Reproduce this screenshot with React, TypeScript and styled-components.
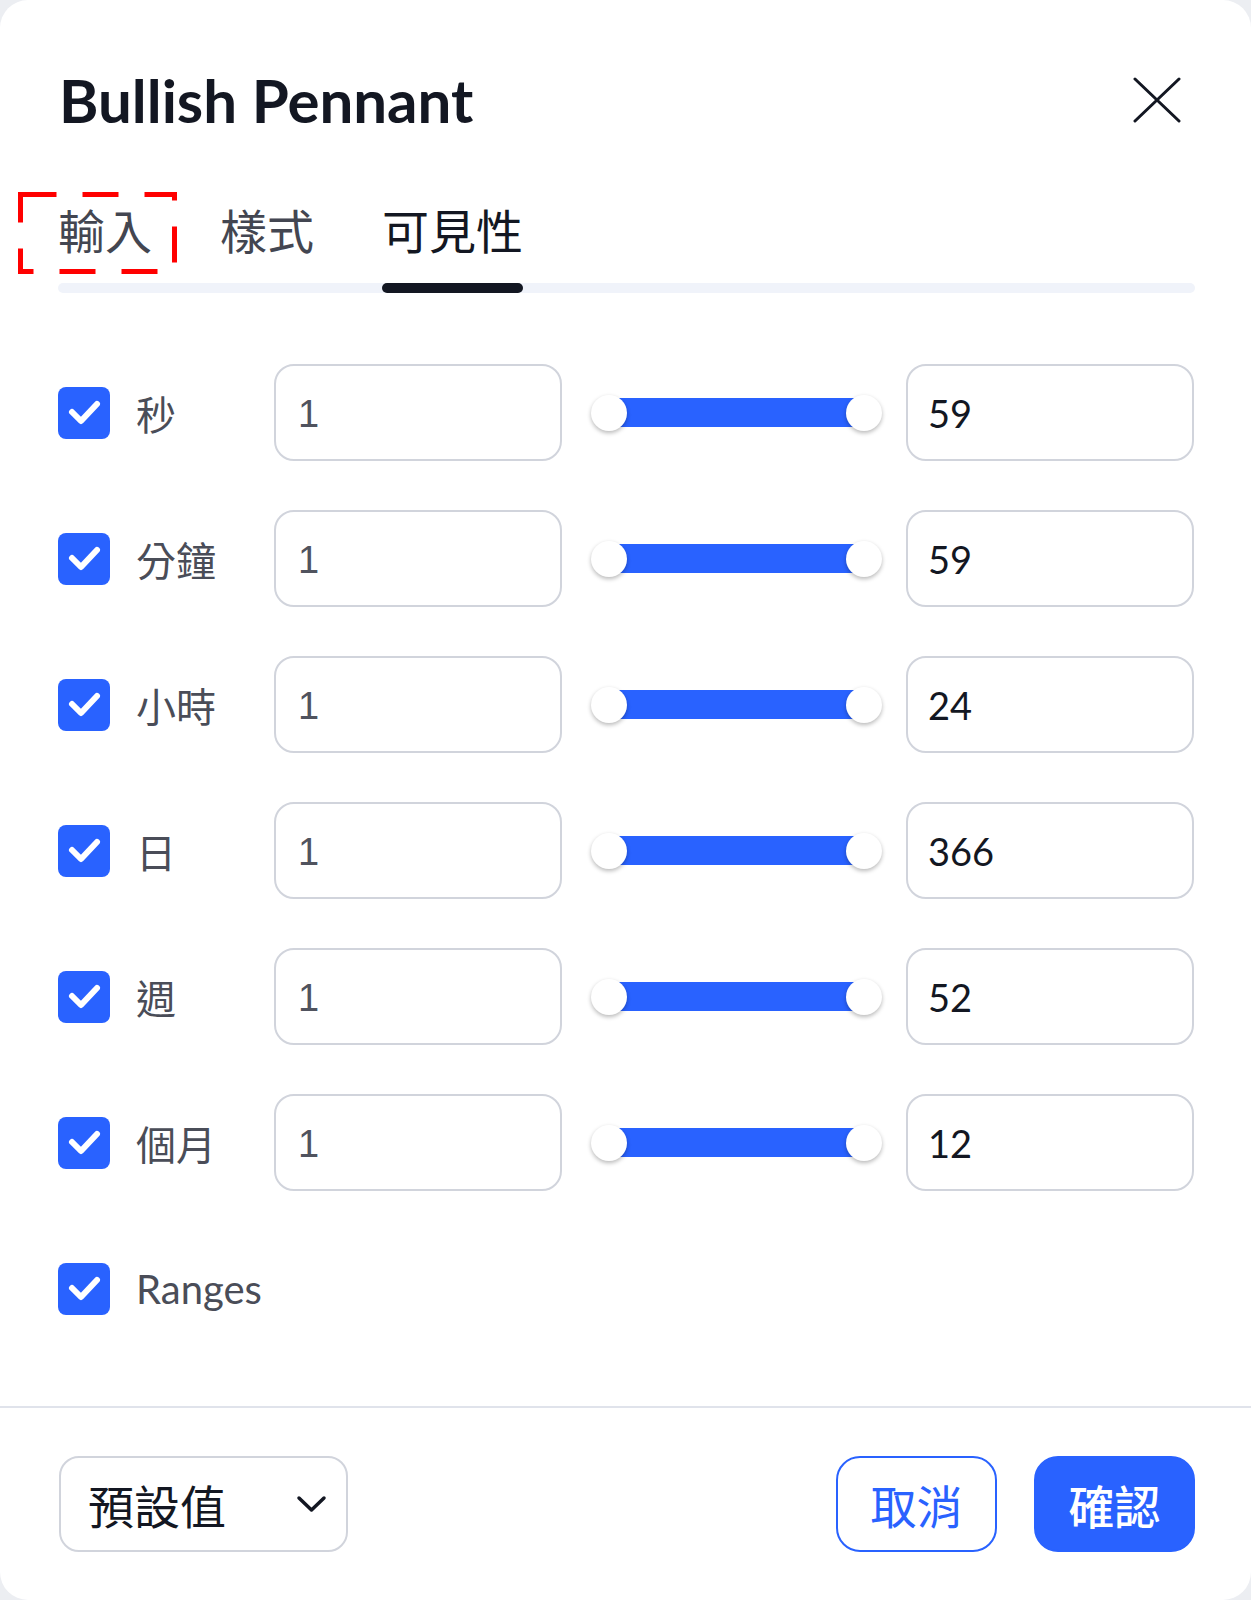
import styled, { createGlobalStyle } from "styled-components";

const GlobalStyle = createGlobalStyle`
  html, body {
    margin: 0;
    padding: 0;
    background: #eceef2;
  }
  * {
    box-sizing: border-box;
  }
`;

const CJK = `"Noto Sans CJK TC", "Noto Sans", sans-serif`;
const LATIN = `Lato, "Noto Sans CJK TC", sans-serif`;
const BLUE = "#2962ff";

const rows = [
    { label: "秒", max: "59" },
    { label: "分鐘", max: "59" },
    { label: "小時", max: "24" },
    { label: "日", max: "366" },
    { label: "週", max: "52" },
    { label: "個月", max: "12" },
];

const CheckIcon = () => (
    <svg width="52" height="52" viewBox="0 0 52 52">
        <path d="M14 25 L23 34 L39 17" fill="none" stroke="#fff" strokeWidth="6" strokeLinecap="round" strokeLinejoin="round" />
    </svg>
);

export default function App() {
    return (
        <>
            <GlobalStyle />
            <Dialog>
                <Header>
                    <Title>Bullish Pennant</Title>
                    <CloseButton>
                        <svg width="48" height="48" viewBox="0 0 48 48">
                            <path d="M2 3 L46 45 M46 3 L2 45" stroke="#131722" strokeWidth="3" strokeLinecap="round" />
                        </svg>
                    </CloseButton>
                </Header>

                <Tabs>
                    <TabRow>
                        <Tab>
                            輸入
                            <Marker>
                                <svg width="159" height="82" viewBox="0 0 159 82">
                                    <rect x="2.5" y="2.5" width="154" height="77" fill="none" stroke="#ff0000" strokeWidth="5" strokeDasharray="36 26" />
                                </svg>
                            </Marker>
                        </Tab>
                        <Tab>樣式</Tab>
                        <Tab $active>可見性</Tab>
                    </TabRow>
                    <Track />
                </Tabs>

                <Body>
                    {rows.map((r) => (
                        <Row key={r.label}>
                            <Checkbox><CheckIcon /></Checkbox>
                            <Label>{r.label}</Label>
                            <Field $muted>1</Field>
                            <Slider>
                                <Thumb />
                                <Fill />
                                <Thumb />
                            </Slider>
                            <Field>{r.max}</Field>
                        </Row>
                    ))}
                    <Row>
                        <Checkbox><CheckIcon /></Checkbox>
                        <Label $latin>Ranges</Label>
                    </Row>
                </Body>

                <Separator />

                <Footer>
                    <Select>
                        <span>預設值</span>
                        <svg width="31" height="18" viewBox="0 0 31 18">
                            <path d="M3 3 L15.5 15 L28 3" fill="none" stroke="#131722" strokeWidth="3.5" strokeLinecap="round" strokeLinejoin="round" />
                        </svg>
                    </Select>
                    <Buttons>
                        <Button>取消</Button>
                        <Button $primary>確認</Button>
                    </Buttons>
                </Footer>
            </Dialog>
        </>
    );
}

const Dialog = styled.div`
    width: 1251px;
    height: 1600px;
    background: #fff;
    border-radius: 28px;
    display: flex;
    flex-direction: column;
    overflow: hidden;
`;

const Header = styled.div`
    display: flex;
    align-items: center;
    justify-content: space-between;
    height: 72px;
    margin-top: 64px;
    padding: 0 68px 0 59px;
`;

const Title = styled.div`
    font-family: ${LATIN};
    font-weight: 700;
    font-size: 60px;
    line-height: 72px;
    color: #131722;
`;

const CloseButton = styled.div`
    width: 52px;
    height: 52px;
    display: flex;
    align-items: center;
    justify-content: center;
`;

const Tabs = styled.div`
    margin: 69px 56px 0 58px;
`;

const TabRow = styled.div`
    display: flex;
    gap: 68px;
`;

const Tab = styled.div<{ $active?: boolean }>`
    position: relative;
    font-family: ${CJK};
    font-size: 47px;
    line-height: 47px;
    padding-bottom: 31px;
    color: ${(p) => (p.$active ? "#131722" : "#434651")};
    &::after {
        content: "";
        display: ${(p) => (p.$active ? "block" : "none")};
        position: absolute;
        left: 0;
        right: 0;
        bottom: -10px;
        height: 10px;
        border-radius: 5px;
        background: #131722;
    }
`;

const Marker = styled.div`
    position: absolute;
    left: -40px;
    top: -13px;
    width: 159px;
    height: 82px;
    svg {
        display: block;
    }
`;

const Track = styled.div`
    height: 10px;
    border-radius: 5px;
    background: #f0f3fa;
`;

const Body = styled.div`
    display: flex;
    flex-direction: column;
    gap: 49px;
    padding: 71px 57px 0 58px;
`;

const Row = styled.div`
    display: flex;
    align-items: center;
    height: 97px;
`;

const Checkbox = styled.div`
    flex: none;
    width: 52px;
    height: 52px;
    border-radius: 8px;
    background: ${BLUE};
    margin-right: 26px;
    svg {
        display: block;
    }
`;

const Label = styled.div<{ $latin?: boolean }>`
    flex: none;
    width: 138px;
    font-family: ${(p) => (p.$latin ? LATIN : CJK)};
    font-size: 40px;
    color: #4a4d58;
`;

const Field = styled.div<{ $muted?: boolean }>`
    flex: none;
    width: 288px;
    height: 97px;
    border: 2px solid #d1d4dc;
    border-radius: 20px;
    padding: ${(p) => (p.$muted ? "4px 22px 0" : "0 20px")};
    display: flex;
    align-items: center;
    font-family: ${(p) => (p.$muted ? `"Liberation Sans", Arial, sans-serif` : LATIN)};
    font-size: 38px;
    color: ${(p) => (p.$muted ? "#50535e" : "#131722")};
`;

const Slider = styled.div`
    flex: none;
    width: 291px;
    margin: 0 24px 0 29px;
    display: flex;
    align-items: center;
`;

const Thumb = styled.div`
    position: relative;
    z-index: 1;
    flex: none;
    width: 36px;
    height: 36px;
    border-radius: 50%;
    background: #fff;
    box-shadow: 0 2px 4px rgba(0, 0, 0, 0.28);
`;

const Fill = styled.div`
    flex: 1;
    height: 29px;
    margin: 0 -18px;
    background: ${BLUE};
`;

const Separator = styled.div`
    height: 2px;
    margin-top: 69px;
    background: #e0e3eb;
`;

const Footer = styled.div`
    display: flex;
    justify-content: space-between;
    padding: 48px 56px 0 59px;
`;

const Select = styled.div`
    width: 289px;
    height: 96px;
    border: 2px solid #d1d4dc;
    border-radius: 20px;
    padding: 0 19px 0 27px;
    display: flex;
    align-items: center;
    justify-content: space-between;
    font-family: ${CJK};
    font-size: 46px;
    color: #131722;
    svg {
        display: block;
    }
`;

const Buttons = styled.div`
    display: flex;
    gap: 37px;
`;

const Button = styled.div<{ $primary?: boolean }>`
    width: 161px;
    height: 96px;
    border-radius: 24px;
    border: 2px solid ${BLUE};
    background: ${(p) => (p.$primary ? BLUE : "#fff")};
    color: ${(p) => (p.$primary ? "#fff" : BLUE)};
    display: flex;
    align-items: center;
    justify-content: center;
    font-family: ${CJK};
    font-size: 46px;
    font-weight: ${(p) => (p.$primary ? 500 : 400)};
`;
